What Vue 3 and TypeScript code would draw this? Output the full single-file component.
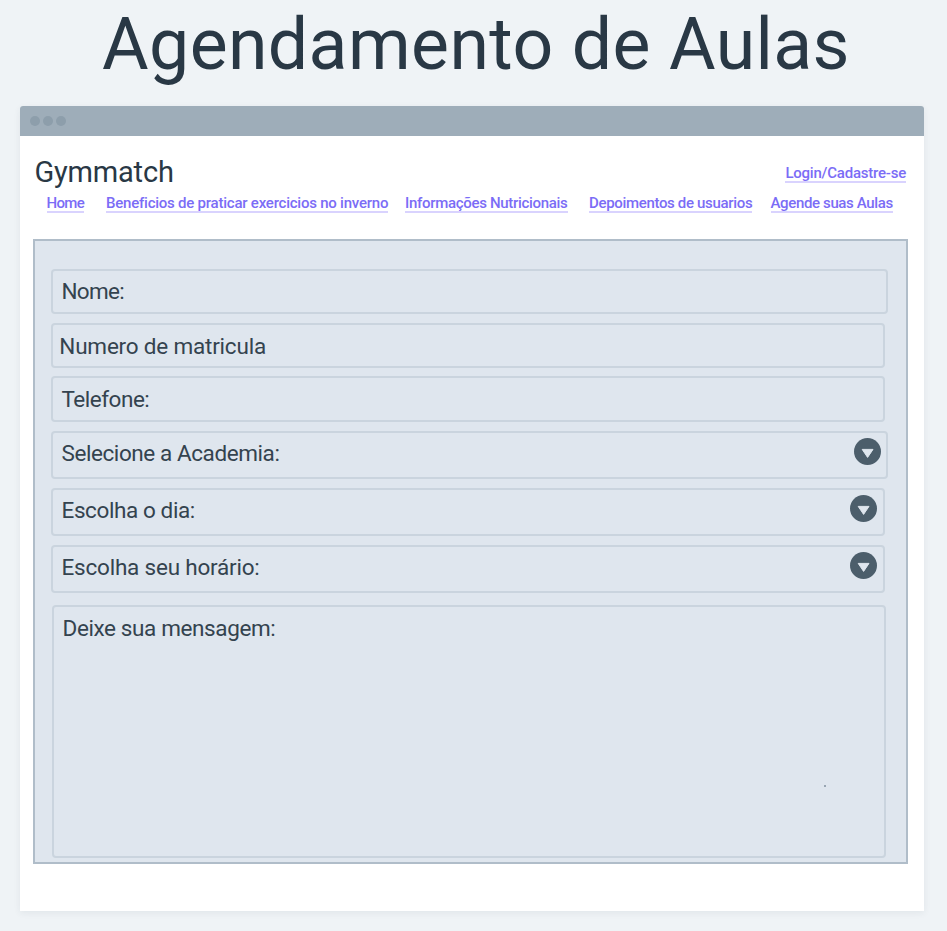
<script setup lang="ts">
interface NavLink { text: string; tracking: number }
interface Field { id: string; label: string; tracking: number; kind: 'input' | 'select' | 'message' }

const login: NavLink = { text: 'Login/Cadastre-se', tracking: -0.22 }

const links: NavLink[] = [
  { text: 'Home', tracking: -0.65 },
  { text: 'Beneficios de praticar exercicios no inverno', tracking: -0.23 },
  { text: 'Informações Nutricionais', tracking: -0.31 },
  { text: 'Depoimentos de usuarios', tracking: -0.33 },
  { text: 'Agende suas Aulas', tracking: -0.36 },
]

const fields: Field[] = [
  { id: 'nome', label: 'Nome:', tracking: -0.7, kind: 'input' },
  { id: 'matricula', label: 'Numero de matricula', tracking: -0.2, kind: 'input' },
  { id: 'telefone', label: 'Telefone:', tracking: -0.48, kind: 'input' },
  { id: 'academia', label: 'Selecione a Academia:', tracking: -0.42, kind: 'select' },
  { id: 'dia', label: 'Escolha o dia:', tracking: -0.4, kind: 'select' },
  { id: 'horario', label: 'Escolha seu horário:', tracking: -0.21, kind: 'select' },
  { id: 'mensagem', label: 'Deixe sua mensagem:', tracking: -0.38, kind: 'message' },
]
</script>

<template>
  <main class="page">
    <h1 class="title">Agendamento de Aulas</h1>
    <section class="window">
      <div class="titlebar"><i class="dot" /><i class="dot" /><i class="dot" /></div>
      <header class="header">
        <span class="brand">Gymmatch</span>
        <a class="link" :style="{ letterSpacing: login.tracking + 'px' }">{{ login.text }}</a>
      </header>
      <nav class="nav">
        <a v-for="l in links" :key="l.text" class="link" :style="{ letterSpacing: l.tracking + 'px' }">{{ l.text }}</a>
      </nav>
      <form class="form">
        <div v-for="f in fields" :key="f.id" class="field" :class="[f.kind, f.id]">
          <label class="label" :style="{ letterSpacing: f.tracking + 'px' }">{{ f.label }}</label>
          <svg v-if="f.kind === 'select'" class="arrow" viewBox="0 0 27 27" width="27" height="27">
            <circle cx="13.5" cy="13.5" r="13.5" fill="#4c5e6b" />
            <path d="M8.2 11.4h10.8L13.6 19.4Z" fill="#dfe6ee" stroke="#dfe6ee" stroke-width="1" stroke-linejoin="round" />
          </svg>
          <i v-if="f.kind === 'message'" class="speck" />
        </div>
      </form>
    </section>
  </main>
</template>

<style>
body { background: #eff3f6; }
</style>

<style scoped>
.page {
  box-sizing: border-box;
  width: 947px;
  height: 931px;
  overflow: hidden;
  background: #eff3f6;
  color: #293845;
  font-family: Roboto, "Liberation Sans", sans-serif;
}
.title {
  box-sizing: border-box;
  height: 106px;
  margin: 0;
  padding: 5px 0 0 102px;
  font-size: 71.5px;
  font-weight: 400;
  line-height: 80px;
  letter-spacing: 0.42px;
  white-space: nowrap;
}
.window {
  width: 904.5px;
  height: 804.5px;
  margin-left: 19.5px;
  background: #fff;
  border-radius: 3px 3px 0 0;
  box-shadow: 0 2px 7px rgba(41, 56, 69, 0.07);
}
.titlebar {
  display: flex;
  align-items: center;
  gap: 3.3px;
  height: 30px;
  padding-left: 10.2px;
  background: #9eadb9;
  border-radius: 3px 3px 0 0;
}
.dot {
  width: 10px;
  height: 10px;
  border-radius: 50%;
  background: #8d9eab;
}
.header {
  display: flex;
  justify-content: space-between;
  align-items: flex-start;
  height: 59px;
  padding: 0 18px 0 15px;
  box-sizing: border-box;
}
.brand {
  margin-top: 19px;
  font-size: 29px;
  line-height: 34px;
  letter-spacing: -0.2px;
}
.link {
  height: 16px;
  border-bottom: 2px solid #d9d3fe;
  color: #7b6cf6;
  font-size: 15px;
  font-weight: 500;
  line-height: 16px;
  white-space: nowrap;
}
.header .link { margin-top: 29px; }
.nav {
  display: grid;
  grid-template-columns: 59.5px 299px 184px 181.5px auto;
  justify-items: start;
  height: 44px;
  padding-left: 27px;
}
.form {
  box-sizing: border-box;
  width: 875px;
  height: 625px;
  margin-left: 13.5px;
  padding: 28px 0 0 16px;
  border: 2px solid #b0bdc9;
  background: #dfe6ee;
}
.field {
  position: relative;
  box-sizing: border-box;
  display: flex;
  justify-content: space-between;
  align-items: flex-start;
  width: 834px;
  height: 45px;
  margin-bottom: 9px;
  padding: 8px 6px 0 8.5px;
  border: 2px solid #cad4de;
  border-radius: 4px;
}
.field.nome, .field.academia { width: 837px; }
.field.matricula { margin-bottom: 8px; padding: 9px 6px 0 6.3px; }
.field.telefone { height: 46px; padding-top: 9px; }
.field.select { height: 48px; padding-top: 8px; }
.field.horario { margin-bottom: 12px; }
.field.message {
  height: 253px;
  margin: 0 0 0 1px;
  padding-top: 9px;
}
.label {
  color: #34434f;
  font-size: 22.5px;
  font-weight: 450;
  line-height: 24px;
  white-space: nowrap;
}
.arrow {
  display: block;
  margin-top: -3.5px;
}
.academia .arrow { margin-right: -1px; }
.speck {
  position: absolute;
  left: 770px;
  top: 178px;
  width: 2px;
  height: 2px;
  background: #98a5b2;
}
</style>
